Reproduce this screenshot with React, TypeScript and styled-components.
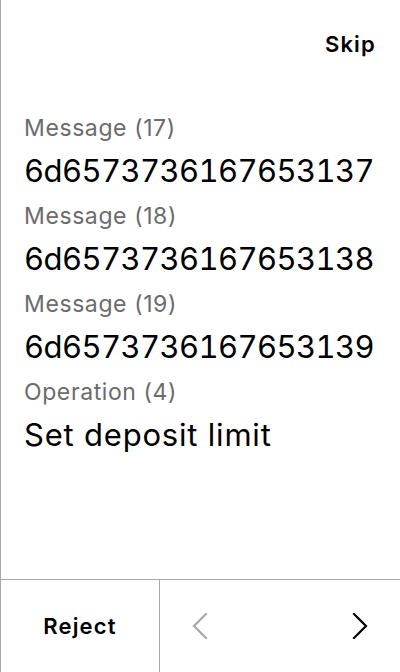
import React from "react";
import styled, { createGlobalStyle } from "styled-components";

const Global = createGlobalStyle`
  html, body { margin: 0; padding: 0; background: #fff; }
  body { font-family: Inter, "Noto Sans", sans-serif; -webkit-font-smoothing: antialiased; }
`;

const Screen = styled.div`
  width: 400px;
  height: 672px;
  box-sizing: border-box;
  border-left: 1px solid #a8a8a8;
  display: flex;
  flex-direction: column;
  background: #fff;
`;

const Header = styled.div`
  display: flex;
  justify-content: flex-end;
  padding: 30px 24px 0 24px;
  height: 86px;
  box-sizing: border-box;
`;

const SkipButton = styled.button`
  border: none;
  background: none;
  padding: 0;
  font-family: inherit;
  font-size: 22px;
  font-weight: 600;
  letter-spacing: 1.2px;
  color: #000;
  line-height: 28px;
  height: 28px;
`;

const Content = styled.div`
  flex: 1;
  padding: 24px 24px 0 23px;
  display: flex;
  flex-direction: column;
`;

const Field = styled.div`
  display: flex;
  flex-direction: column;
  margin-bottom: 2px;
`;

const Label = styled.div`
  font-size: 23px;
  line-height: 36px;
  color: #6b6b6b;
  font-weight: 400;
  letter-spacing: 0.6px;
`;

const Value = styled.div<{ $hex?: boolean }>`
  font-size: 31px;
  line-height: 50px;
  color: #000;
  font-weight: 400;
  letter-spacing: ${(p) => (p.$hex ? "-0.6px" : "0.8px")};
  font-variant-numeric: ${(p) => (p.$hex ? "tabular-nums" : "normal")};
`;

const Footer = styled.div`
  height: 92px;
  border-top: 1px solid #a8a8a8;
  display: grid;
  grid-template-columns: 159px 1fr;
`;

const RejectCell = styled.button`
  border: none;
  border-right: 1px solid #a8a8a8;
  background: none;
  font-family: inherit;
  font-size: 22px;
  font-weight: 600;
  letter-spacing: 1.2px;
  color: #000;
  padding: 0;
`;

const NavCell = styled.div`
  display: flex;
  align-items: center;
  justify-content: space-between;
  padding: 0 32px 0 32px;
`;

const NavButton = styled.button<{ $disabled?: boolean }>`
  border: none;
  background: none;
  padding: 0;
  display: flex;
  color: ${(p) => (p.$disabled ? "#a8a8a8" : "#000")};
`;

const Chevron = ({ dir }: { dir: "left" | "right" }) => (
  <svg width="16" height="26" viewBox="0 0 16 26" fill="none">
    <path
      d={dir === "left" ? "M14 1 L2 13 L14 25" : "M2 1 L14 13 L2 25"}
      stroke="currentColor"
      strokeWidth="2.2"
      strokeLinecap="square"
      strokeLinejoin="miter"
    />
  </svg>
);

const fields = [
  { label: "Message (17)", value: "6d6573736167653137", hex: true },
  { label: "Message (18)", value: "6d6573736167653138", hex: true },
  { label: "Message (19)", value: "6d6573736167653139", hex: true },
  { label: "Operation (4)", value: "Set deposit limit", hex: false },
];

export default function App() {
  return (
    <>
      <Global />
      <Screen>
        <Header>
          <SkipButton>Skip</SkipButton>
        </Header>
        <Content>
          {fields.map((f) => (
            <Field key={f.label}>
              <Label>{f.label}</Label>
              <Value $hex={f.hex}>{f.value}</Value>
            </Field>
          ))}
        </Content>
        <Footer>
          <RejectCell>Reject</RejectCell>
          <NavCell>
            <NavButton $disabled>
              <Chevron dir="left" />
            </NavButton>
            <NavButton>
              <Chevron dir="right" />
            </NavButton>
          </NavCell>
        </Footer>
      </Screen>
    </>
  );
}
